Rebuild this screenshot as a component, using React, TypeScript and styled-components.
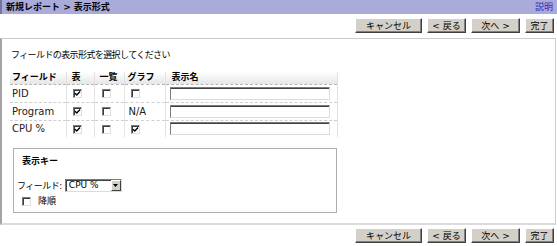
import React from "react";
import styled, { createGlobalStyle } from "styled-components";

const Global = createGlobalStyle`
  html, body { margin: 0; padding: 0; background: #ffffff; }
  body {
    font-family: "DejaVu Sans", "Noto Sans CJK JP", sans-serif;
    font-size: 9px;
    color: #000;
  }
  * { box-sizing: border-box; }
`;

const Page = styled.div`
  width: 557px;
  height: 246px;
  display: flex;
  flex-direction: column;
  overflow: hidden;
`;

const TitleBar = styled.div`
  height: 14px;
  background: #aaaadb;
  border-left: 2px solid #74749c;
  display: flex;
  align-items: center;
  justify-content: space-between;
  padding: 0 4px 0 4px;
`;

const Title = styled.span`
  font-weight: bold;
  font-size: 9px;
  line-height: 14px;
  white-space: pre;
`;

const HelpLink = styled.a`
  color: #2a2ab8;
  text-decoration: none;
  font-size: 9px;
  line-height: 14px;
`;

const ButtonBar = styled.div<{ $top: number; $bottom: number }>`
  display: flex;
  justify-content: flex-end;
  gap: 5px;
  padding: ${(p) => p.$top}px 3px ${(p) => p.$bottom}px 0;
`;

const Button = styled.button<{ $w: number }>`
  width: ${(p) => p.$w}px;
  height: 15px;
  padding: 0;
  margin: 0;
  background: #d4d0c8;
  border: 1px solid;
  border-color: #ffffff #404040 #404040 #ffffff;
  box-shadow: inset -1px -1px 0 #808080;
  font-family: "DejaVu Sans", "Noto Sans CJK JP", sans-serif;
  font-size: 9px;
  line-height: 12px;
  color: #000;
  white-space: pre;
`;

const Panel = styled.div`
  margin-right: 1px;
  border: 1px solid #cbcbcb;
  border-left: 2px solid #a4a4a4;
  border-bottom: 2px solid #dcdcdc;
  padding: 10px 0 10px 8px;
  display: flex;
  flex-direction: column;
`;

const Instruction = styled.div`
  line-height: 12px;
  height: 12px;
  margin-bottom: 11px;
  white-space: nowrap;
  letter-spacing: -0.6px;
  padding-left: 1px;
`;

const Table = styled.table`
  width: 327px;
  border-collapse: collapse;
  table-layout: fixed;
`;

const HeadCell = styled.th<{ $w: number; $pl: number; $first?: boolean; $last?: boolean }>`
  width: ${(p) => p.$w}px;
  height: 12px;
  padding: 0 0 0 ${(p) => p.$pl}px;
  text-align: left;
  font-weight: bold;
  font-size: 9px;
  line-height: 11px;
  background: linear-gradient(#ffffff, #e6e6e6);
  border-bottom: 1px dashed #b4b4b4;
  border-left: ${(p) => (p.$first ? "none" : "1px solid #e2e2e2")};
  border-right: ${(p) => (p.$last ? "1px solid #e2e2e2" : "none")};
  white-space: nowrap;
  vertical-align: middle;
`;

const Row = styled.tr<{ $last?: boolean }>`
  height: ${(p) => (p.$last ? 17 : 18)}px;
  border-bottom: ${(p) => (p.$last ? "none" : "1px dashed #cfcfcf")};
`;

const Cell = styled.td<{ $pl: number; $first?: boolean; $last?: boolean }>`
  padding: 0 0 0 ${(p) => p.$pl}px;
  border-left: ${(p) => (p.$first ? "none" : "1px solid #e2e2e2")};
  border-right: ${(p) => (p.$last ? "1px solid #e2e2e2" : "none")};
  vertical-align: middle;
  white-space: nowrap;
  line-height: 12px;
`;

const LatinText = styled.span`
  display: block;
  font-family: "DejaVu Sans", sans-serif;
  font-size: 10px;
  line-height: 12px;
  padding-top: 1px;
  color: #222;
`;

const Box = styled.span`
  display: inline-block;
  width: 9px;
  height: 9px;
  background: #fff;
  border: 1px solid;
  border-color: #7a7a7a #dedede #dedede #7a7a7a;
  box-shadow: inset 1px 1px 0 #3a3a3a;
  vertical-align: middle;
  position: relative;
`;

const Tick = styled.svg`
  position: absolute;
  left: 0;
  top: 0;
`;

const Check = ({ on }: { on?: boolean }) => (
  <Box>
    {on && (
      <Tick width="7" height="7" viewBox="0 0 7 7">
        <path d="M1 3.2 L2.8 5 L6 1.6" stroke="#000" strokeWidth="1.4" fill="none" />
      </Tick>
    )}
  </Box>
);

const NameInput = styled.input`
  display: block;
  width: 160px;
  height: 13px;
  margin: 0;
  padding: 0 2px;
  background: #fff;
  border: 1px solid;
  border-color: #7a7a7a #dcdcdc #dcdcdc #7a7a7a;
  box-shadow: inset 0 1px 0 #404040;
  outline: none;
`;

const KeyBox = styled.div`
  margin: 11px 0 0 3px;
  width: 324px;
  height: 65px;
  border: 1px solid #adadad;
  display: flex;
  flex-direction: column;
  padding: 6px 0 0 0;
`;

const KeyTitle = styled.div`
  font-weight: bold;
  line-height: 12px;
  margin-left: 8px;
`;

const FieldRow = styled.div`
  display: flex;
  align-items: center;
  margin: 12px 0 0 3px;
  height: 13px;
`;

const FieldLabel = styled.span`
  letter-spacing: -0.5px;
`;

const Select = styled.div`
  margin-left: 3px;
  width: 57px;
  height: 13px;
  background: #fff;
  border: 1px solid;
  border-color: #7a7a7a #dcdcdc #dcdcdc #7a7a7a;
  box-shadow: inset 1px 1px 0 #404040;
  display: flex;
  align-items: center;
  justify-content: space-between;
  padding-left: 3px;
`;

const SelectText = styled.span`
  font-family: "DejaVu Sans", sans-serif;
  font-size: 9px;
  line-height: 11px;
`;

const Arrow = styled.span`
  width: 10px;
  height: 11px;
  background: #d4d0c8;
  border: 1px solid;
  border-color: #ffffff #404040 #404040 #ffffff;
  display: flex;
  align-items: center;
  justify-content: center;
`;

const OrderRow = styled.div`
  display: flex;
  align-items: center;
  gap: 7px;
  margin: 4px 0 0 8px;
  height: 11px;
  line-height: 11px;
`;

export default function App() {
  const rows = [
    { name: "PID", table: true, list: false, graph: "box", graphOn: false },
    { name: "Program", table: true, list: false, graph: "na", graphOn: false },
    { name: "CPU %", table: true, list: false, graph: "box", graphOn: true },
  ];
  return (
    <Page>
      <Global />
      <TitleBar>
        <Title>新規レポート {">"} 表示形式</Title>
        <HelpLink href="#">説明</HelpLink>
      </TitleBar>
      <ButtonBar $top={4} $bottom={5}>
        <Button $w={67}>キャンセル</Button>
        <Button $w={39}>{"< 戻る"}</Button>
        <Button $w={49}>{"次へ >"}</Button>
        <Button $w={29}>完了</Button>
      </ButtonBar>
      <Panel>
        <Instruction>フィールドの表示形式を選択してください</Instruction>
        <Table>
          <thead>
            <tr>
              <HeadCell $w={56} $pl={2} $first>フィールド</HeadCell>
              <HeadCell $w={28} $pl={5}>表</HeadCell>
              <HeadCell $w={30} $pl={5}>一覧</HeadCell>
              <HeadCell $w={41} $pl={3}>グラフ</HeadCell>
              <HeadCell $w={172} $pl={6} $last>表示名</HeadCell>
            </tr>
          </thead>
          <tbody>
            {rows.map((r, i) => (
              <Row key={r.name} $last={i === rows.length - 1}>
                <Cell $pl={2} $first>
                  <LatinText>{r.name}</LatinText>
                </Cell>
                <Cell $pl={6}>
                  <Check on={r.table} />
                </Cell>
                <Cell $pl={7}>
                  <Check on={r.list} />
                </Cell>
                <Cell $pl={r.graph === "na" ? 4 : 6}>
                  {r.graph === "na" ? <LatinText>N/A</LatinText> : <Check on={r.graphOn} />}
                </Cell>
                <Cell $pl={4} $last>
                  <NameInput />
                </Cell>
              </Row>
            ))}
          </tbody>
        </Table>
        <KeyBox>
          <KeyTitle>表示キー</KeyTitle>
          <FieldRow>
            <FieldLabel>フィールド:</FieldLabel>
            <Select>
              <SelectText>CPU %</SelectText>
              <Arrow>
                <svg width="5" height="3" viewBox="0 0 5 3">
                  <path d="M0 0 H5 L2.5 3 Z" fill="#000" />
                </svg>
              </Arrow>
            </Select>
          </FieldRow>
          <OrderRow>
            <Check />
            <span>降順</span>
          </OrderRow>
        </KeyBox>
      </Panel>
      <ButtonBar $top={3} $bottom={0}>
        <Button $w={67}>キャンセル</Button>
        <Button $w={39}>{"< 戻る"}</Button>
        <Button $w={49}>{"次へ >"}</Button>
        <Button $w={29}>完了</Button>
      </ButtonBar>
    </Page>
  );
}
